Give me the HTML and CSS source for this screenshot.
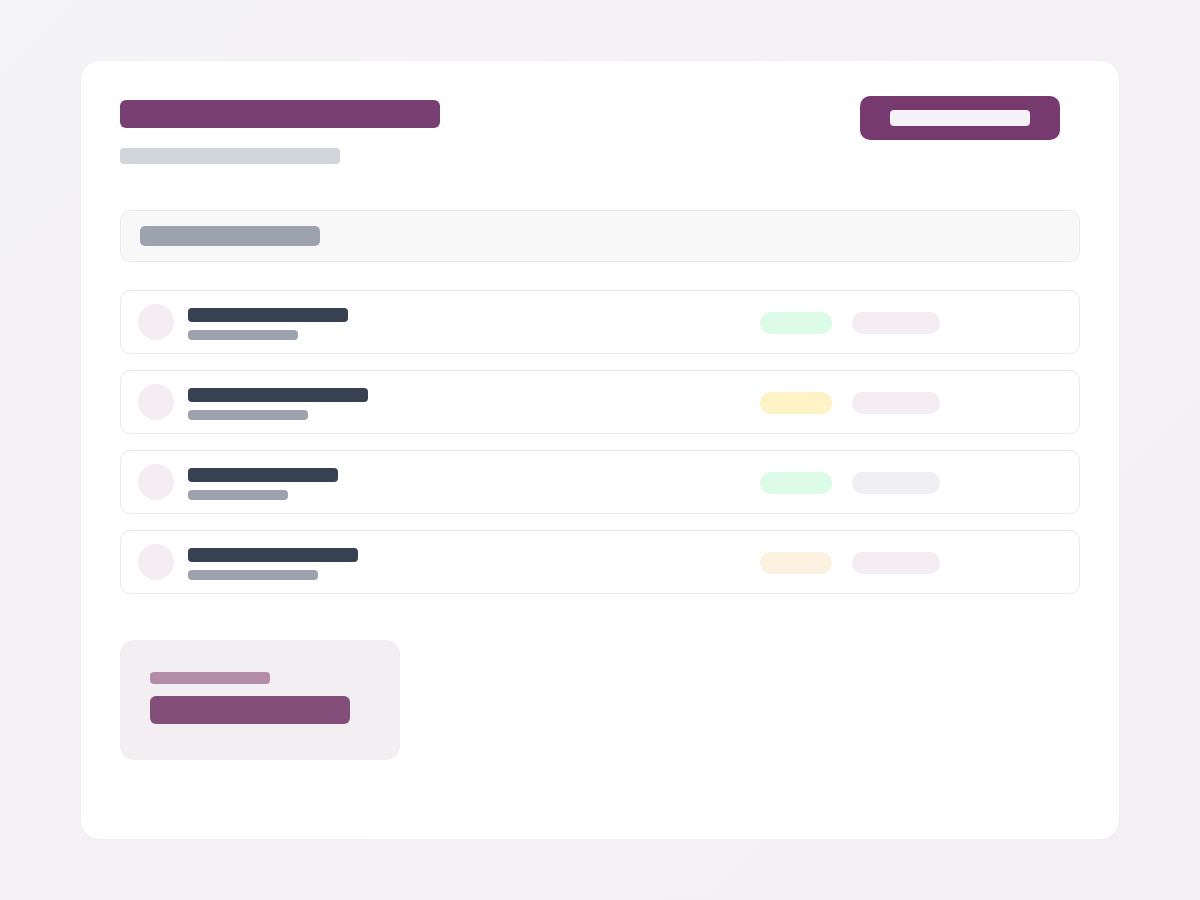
FILE: index.html
```html
<!DOCTYPE html>
<html lang="en">
<head>
    <meta charset="UTF-8">
    <meta name="viewport" content="width=device-width, initial-scale=1.0">
    <title>Loading</title>
    <link rel="stylesheet" href="styles.css">
</head>
<body>
    <div class="card">
        <div class="header">
            <div class="header-text">
                <div class="sk title"></div>
                <div class="sk subtitle"></div>
            </div>
            <div class="btn"><div class="sk btn-label"></div></div>
        </div>

        <div class="toolbar">
            <div class="sk toolbar-label"></div>
        </div>

        <div class="list">
            <div class="row">
                <div class="avatar"></div>
                <div class="row-text">
                    <div class="sk name" style="width:160px"></div>
                    <div class="sk meta" style="width:110px"></div>
                </div>
                <div class="pill green"></div>
                <div class="pill muted"></div>
            </div>
            <div class="row">
                <div class="avatar"></div>
                <div class="row-text">
                    <div class="sk name" style="width:180px"></div>
                    <div class="sk meta" style="width:120px"></div>
                </div>
                <div class="pill yellow"></div>
                <div class="pill muted"></div>
            </div>
            <div class="row">
                <div class="avatar"></div>
                <div class="row-text">
                    <div class="sk name" style="width:150px"></div>
                    <div class="sk meta" style="width:100px"></div>
                </div>
                <div class="pill green"></div>
                <div class="pill grey"></div>
            </div>
            <div class="row">
                <div class="avatar"></div>
                <div class="row-text">
                    <div class="sk name" style="width:170px"></div>
                    <div class="sk meta" style="width:130px"></div>
                </div>
                <div class="pill orange"></div>
                <div class="pill muted"></div>
            </div>
        </div>

        <div class="stat">
            <div class="sk stat-label"></div>
            <div class="sk stat-value"></div>
        </div>
    </div>
</body>
</html>
```

FILE: styles.css
```css
* {
    box-sizing: border-box;
    margin: 0;
    padding: 0;
}
body {
    font-family: 'Liberation Sans', Arial, sans-serif;
    background: linear-gradient(135deg, #f5f4f7 0%, #f4eff3 100%);
    width: 1200px;
    height: 900px;
    padding: 60px 80px;
}
.card {
    height: 780px;
    background-color: #ffffff;
    border: 1px solid #efeef2;
    border-radius: 20px;
    padding: 39px;
}
.sk {
    border-radius: 4px;
}
.header {
    display: flex;
    justify-content: space-between;
    align-items: flex-start;
}
.title {
    width: 320px;
    height: 28px;
    border-radius: 6px;
    background-color: #783f72;
}
.subtitle {
    width: 220px;
    height: 16px;
    margin-top: 20px;
    background-color: #d1d5db;
}
.btn {
    width: 200px;
    height: 44px;
    margin-top: -4px;
    margin-right: 20px;
    border-radius: 10px;
    background-color: #763a6e;
    display: flex;
    align-items: center;
    justify-content: center;
}
.btn-label {
    width: 140px;
    height: 16px;
    background-color: #f5f2f7;
}
.toolbar {
    margin-top: 46px;
    height: 52px;
    background-color: #f8f8f9;
    border: 1px solid #ebeaee;
    border-radius: 10px;
    padding: 0 19px;
    display: flex;
    align-items: center;
}
.toolbar-label {
    width: 180px;
    height: 20px;
    border-radius: 5px;
    background-color: #9ca3af;
}
.list {
    margin-top: 28px;
    display: flex;
    flex-direction: column;
    gap: 16px;
}
.row {
    height: 64px;
    border: 1px solid #ebeaef;
    border-radius: 10px;
    padding: 0 139px 0 17px;
    display: flex;
    align-items: center;
}
.avatar {
    width: 36px;
    height: 36px;
    border-radius: 50%;
    background-color: #f4eef2;
    margin-right: 14px;
}
.row-text {
    flex: 1;
    display: flex;
    flex-direction: column;
    gap: 8px;
    margin-top: 4px;
}
.name {
    height: 14px;
    background-color: #374151;
}
.meta {
    height: 10px;
    background-color: #9ca3af;
}
.pill {
    height: 22px;
    margin-top: 2px;
    border-radius: 11px;
}
.pill.green,
.pill.yellow,
.pill.orange {
    width: 72px;
    margin-right: 20px;
}
.pill.muted,
.pill.grey {
    width: 88px;
}
.green {
    background-color: #dcfce7;
}
.yellow {
    background-color: #fef3c7;
}
.orange {
    background-color: #fdf2e2;
}
.muted {
    background-color: #f4eef2;
}
.grey {
    background-color: #f0f0f4;
}
.stat {
    margin-top: 46px;
    width: 280px;
    height: 120px;
    border-radius: 14px;
    background-color: #f3eef2;
    padding: 32px 30px;
}
.stat-label {
    width: 120px;
    height: 12px;
    background-color: #b38ca9;
}
.stat-value {
    width: 200px;
    height: 28px;
    margin-top: 12px;
    border-radius: 6px;
    background-color: #834e79;
}
```
